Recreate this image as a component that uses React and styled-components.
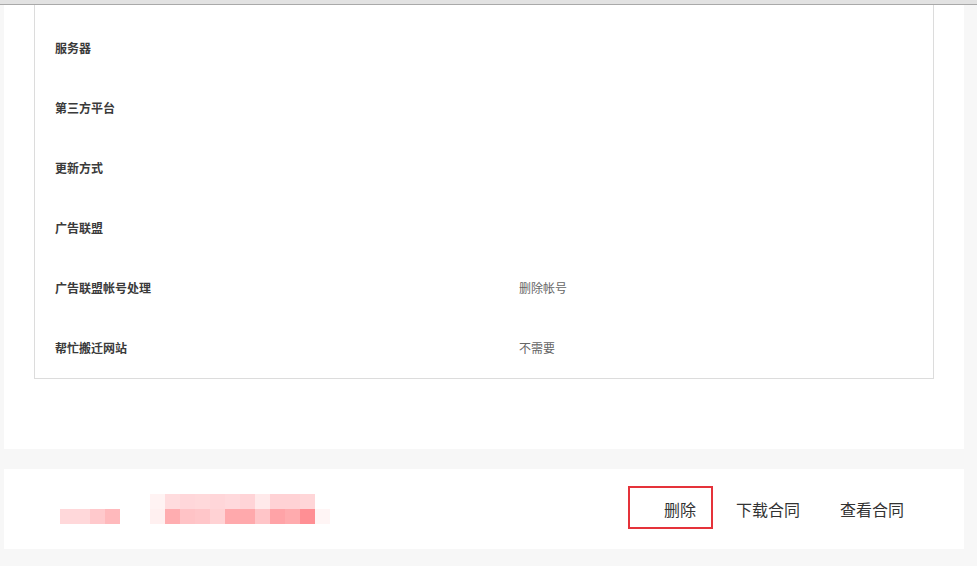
import React from 'react';
import styled, { createGlobalStyle } from 'styled-components';

const GlobalStyle = createGlobalStyle`
  html, body {
    margin: 0;
    padding: 0;
    background: #f7f7f7;
    font-family: "Liberation Sans", "Noto Sans CJK SC", sans-serif;
  }
`;

const Page = styled.div`
  width: 977px;
  height: 566px;
  overflow: hidden;
  background: #f7f7f7;
`;

const TopBar = styled.div`
  height: 4px;
  background: #e2e2e2;
  border-bottom: 1px solid #a9a9a9;
`;

const Card = styled.div`
  margin: 0 13px 0 4px;
  background: #fff;
  padding: 0 30px 70px;
`;

const Table = styled.div`
  border: 1px solid #dcdcdc;
  border-top: none;
  padding-top: 13px;
`;

const Row = styled.div`
  box-sizing: border-box;
  display: grid;
  grid-template-columns: 464px 1fr;
  align-items: center;
  height: 60px;
  padding: 0 0 2px 20px;
  font-size: 12px;
`;

const Label = styled.span`
  color: #3a3a3a;
  font-weight: 700;
`;

const Value = styled.span`
  color: #666;
`;

const Footer = styled.div`
  margin: 20px 13px 0 4px;
  height: 80px;
  background: #fff;
  display: flex;
  align-items: center;
  padding-right: 60px;
`;

const Blur = styled.svg`
  display: block;
  margin-left: 52px;
  margin-top: 2px;
`;

const Actions = styled.div`
  margin-left: auto;
  display: flex;
  align-items: center;
  font-size: 16px;
  color: #333;
`;

const Action = styled.button`
  box-sizing: border-box;
  background: none;
  border: ${(p) => (p.$active ? '2px solid #e5323a' : 'none')};
  height: 43px;
  padding: ${(p) => (p.$active ? '4px 15px 0 34px' : '4px 0 0')};
  margin-left: ${(p) => p.$gap || 0}px;
  margin-top: -4px;
  font: inherit;
  font-family: "Noto Sans CJK SC", sans-serif;
  color: inherit;
  cursor: pointer;
`;

const rows = [
  ['服务器', ''],
  ['第三方平台', ''],
  ['更新方式', ''],
  ['广告联盟', ''],
  ['广告联盟帐号处理', '删除帐号'],
  ['帮忙搬迁网站', '不需要'],
];

const cells = [
  [4, 29, '#ffd8da'], [19, 29, '#ffd8da'], [34, 29, '#ffc9cc'], [49, 29, '#ffb9bc'],
  [94, 14, '#fff3f3'], [109, 14, '#ffdcde'], [124, 14, '#ffd7da'], [139, 14, '#ffd9db'],
  [154, 14, '#ffd6d9'], [169, 14, '#ffd9dc'], [184, 14, '#ffd4d7'], [199, 14, '#ffe9ea'],
  [214, 14, '#ffd2d5'], [229, 14, '#ffd2d5'], [244, 14, '#ffd6d8'],
  [94, 29, '#fff0f0'], [109, 29, '#ffadb0'], [124, 29, '#ffc3c6'], [139, 29, '#ffc6c9'],
  [154, 29, '#ffd2d4'], [169, 29, '#ffa9ac'], [184, 29, '#ffa9ac'], [199, 29, '#ffc5c8'],
  [214, 29, '#ffa3a7'], [229, 29, '#ffabae'], [244, 29, '#ff8f94'],
  [259, 29, '#fff5f5'],
];

export default function App() {
  return (
    <Page>
      <GlobalStyle />
      <TopBar />
      <Card>
        <Table>
          {rows.map(([label, value]) => (
            <Row key={label}>
              <Label>{label}</Label>
              <Value>{value}</Value>
            </Row>
          ))}
        </Table>
      </Card>
      <Footer>
        <Blur width="290" height="60" viewBox="0 0 290 60">
          {cells.map(([x, y, c], i) => (
            <rect key={i} x={x} y={y} width="15" height="15" fill={c} />
          ))}
        </Blur>
        <Actions>
          <Action $active>删除</Action>
          <Action $gap={23}>下载合同</Action>
          <Action $gap={40}>查看合同</Action>
        </Actions>
      </Footer>
    </Page>
  );
}
